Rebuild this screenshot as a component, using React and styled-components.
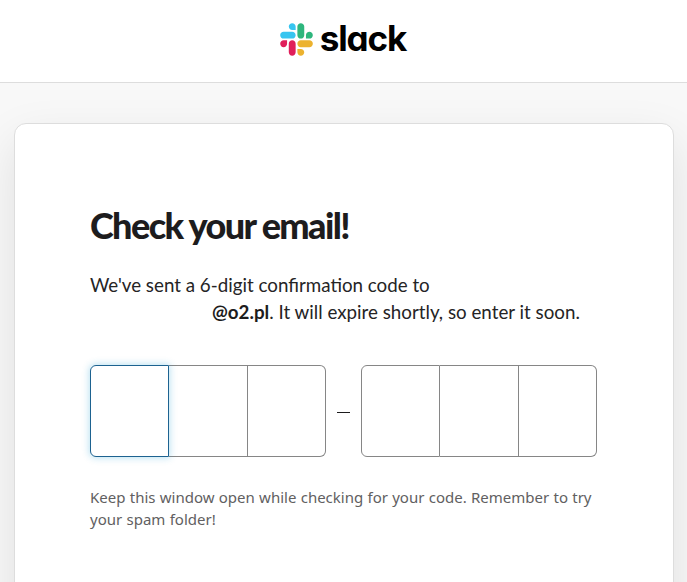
import React from "react";
import styled, { createGlobalStyle } from "styled-components";

const App = () => {
  const renderDigits = (start) => {
    const digits = [];
    for (let i = start; i < start + 3; i++) {
      digits.push(
        <Digit key={i} maxLength={1} aria-label={`digit ${i}`} $active={i === 1} />
      );
    }
    return <DigitGroup>{digits}</DigitGroup>;
  };

  return (
    <Page>
      <GlobalStyle />
      <Header>
        <SlackMark />
        <WordMark>slack</WordMark>
      </Header>
      <Card>
        <Title>Check your email!</Title>
        <Description>
          We've sent a 6-digit confirmation code to
          <br />
          <Address>@o2.pl</Address>. It will expire shortly, so enter it soon.
        </Description>
        <CodeRow>
          {renderDigits(1)}
          <Dash />
          {renderDigits(4)}
        </CodeRow>
        <Hint>
          Keep this window open while checking for your code. Remember to try
          <br />
          your spam folder!
        </Hint>
      </Card>
    </Page>
  );
};

const SlackMark = () => (
  <Mark viewBox="0 0 127 127">
    <path
      fill="#e01e5a"
      d="M27.2 80c0 7.3-5.9 13.2-13.2 13.2C6.7 93.2.8 87.3.8 80c0-7.3 5.9-13.2 13.2-13.2h13.2V80zm6.6 0c0-7.3 5.9-13.2 13.2-13.2 7.3 0 13.2 5.9 13.2 13.2v33c0 7.3-5.9 13.2-13.2 13.2-7.3 0-13.2-5.9-13.2-13.2V80z"
    />
    <path
      fill="#36c5f0"
      d="M47 27c-7.3 0-13.2-5.9-13.2-13.2C33.8 6.5 39.7.6 47 .6c7.3 0 13.2 5.9 13.2 13.2V27H47zm0 6.7c7.3 0 13.2 5.9 13.2 13.2 0 7.3-5.9 13.2-13.2 13.2H13.9C6.6 60.1.7 54.2.7 46.9c0-7.3 5.9-13.2 13.2-13.2H47z"
    />
    <path
      fill="#2eb67d"
      d="M99.9 46.9c0-7.3 5.9-13.2 13.2-13.2 7.3 0 13.2 5.9 13.2 13.2 0 7.3-5.9 13.2-13.2 13.2H99.9V46.9zm-6.6 0c0 7.3-5.9 13.2-13.2 13.2-7.3 0-13.2-5.9-13.2-13.2V13.8C66.9 6.5 72.8.6 80.1.6c7.3 0 13.2 5.9 13.2 13.2v33.1z"
    />
    <path
      fill="#ecb22e"
      d="M80.1 99.8c7.3 0 13.2 5.9 13.2 13.2 0 7.3-5.9 13.2-13.2 13.2-7.3 0-13.2-5.9-13.2-13.2V99.8h13.2zm0-6.6c-7.3 0-13.2-5.9-13.2-13.2 0-7.3 5.9-13.2 13.2-13.2h33.1c7.3 0 13.2 5.9 13.2 13.2 0 7.3-5.9 13.2-13.2 13.2H80.1z"
    />
  </Mark>
);

export default App;

const GlobalStyle = createGlobalStyle`
  * {
    box-sizing: border-box;
  }
  body {
    margin: 0;
    overflow: hidden;
    font-family: Lato, "Liberation Sans", sans-serif;
    color: #1d1c1d;
  }
`;
const Page = styled.div`
  height: 582px;
  overflow: hidden;
  background: #f8f8f8;
`;
const Header = styled.header`
  display: flex;
  justify-content: center;
  height: 83px;
  padding: 23px 1px 0 0;
  background: #fff;
  border-bottom: 1px solid #dddddd;
`;
const Mark = styled.svg`
  width: 33px;
  height: 33px;
`;
const WordMark = styled.span`
  margin-left: 7px;
  font-family: Inter, sans-serif;
  font-size: 35px;
  font-weight: 750;
  font-feature-settings: "cv11";
  line-height: 31px;
  letter-spacing: -1.1px;
  color: #000;
`;
const Card = styled.main`
  width: 660px;
  height: 620px;
  margin: 40px 0 0 14px;
  padding: 78px 75px 0;
  background: #fff;
  border: 1px solid #dddddd;
  border-radius: 12px;
  box-shadow: 0 18px 48px rgba(0, 0, 0, 0.1);
`;
const Title = styled.h1`
  margin: 0;
  font-size: 36px;
  font-weight: 900;
  line-height: 46px;
  letter-spacing: -1.6px;
`;
const Description = styled.p`
  margin: 23px 0 0;
  font-size: 18.75px;
  line-height: 27px;
  color: #252425;
  white-space: nowrap;
`;
const Address = styled.strong`
  margin-left: 122px;
  color: #1d1c1d;
`;
const CodeRow = styled.div`
  display: flex;
  align-items: center;
  margin-top: 40px;
`;
const DigitGroup = styled.div`
  display: flex;
  width: 236px;
`;
const Digit = styled.input`
  flex: 1;
  min-width: 0;
  height: 92px;
  margin: 0;
  padding: 0;
  text-align: center;
  font: inherit;
  font-size: 36px;
  background: #fff;
  border: 1px solid #868686;
  border-left-width: 0;
  border-radius: 0;
  outline: none;
  &:first-child {
    border-left-width: 1px;
    border-radius: 6px 0 0 6px;
  }
  &:last-child {
    border-radius: 0 6px 6px 0;
  }
  ${({ $active }) =>
    $active &&
    `
    position: relative;
    border-color: #1d6290;
    box-shadow: 0 0 7px 1px rgba(29, 155, 209, 0.3);
  `}
`;
const Dash = styled.span`
  width: 13px;
  height: 1px;
  margin: 2px 11px 0;
  background: #1d1c1d;
`;
const Hint = styled.p`
  margin: 29px 0 0;
  font-family: "Noto Sans", sans-serif;
  font-size: 15px;
  line-height: 22px;
  word-spacing: 0.4px;
  color: #616061;
  white-space: nowrap;
`;
